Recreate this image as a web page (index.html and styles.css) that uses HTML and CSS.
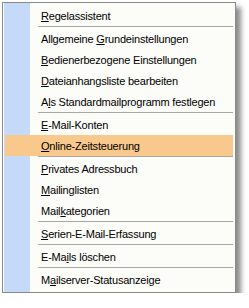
FILE: index.html
```html
<!DOCTYPE html>
<html>
<head>
<meta charset="utf-8">
<link rel="stylesheet" href="styles.css">
</head>
<body>
<div class="menu">
  <div class="item"><span class="label"><u>R</u>egelassistent</span></div>
  <div class="sep"></div>
  <div class="item"><span class="label">Allgemeine <u>G</u>rundeinstellungen</span></div>
  <div class="item"><span class="label"><u>B</u>edienerbezogene Einstellungen</span></div>
  <div class="item"><span class="label"><u>D</u>ateianhangsliste bearbeiten</span></div>
  <div class="item"><span class="label">A<u>l</u>s Standardmailprogramm festlegen</span></div>
  <div class="sep"></div>
  <div class="item"><span class="label"><u>E</u>-Mail-Konten</span></div>
  <div class="item active"><span class="label"><u>O</u>nline-Zeitsteuerung</span></div>
  <div class="sep"></div>
  <div class="item"><span class="label"><u>P</u>rivates Adressbuch</span></div>
  <div class="item"><span class="label"><u>M</u>ailinglisten</span></div>
  <div class="item"><span class="label">Mail<u>k</u>ategorien</span></div>
  <div class="sep"></div>
  <div class="item"><span class="label"><u>S</u>erien-E-Mail-Erfassung</span></div>
  <div class="sep"></div>
  <div class="item"><span class="label">E-Ma<u>i</u>ls löschen</span></div>
  <div class="sep"></div>
  <div class="item"><span class="label">M<u>a</u>ilserver-Statusanzeige</span></div>
</div>
</body>
</html>
```
FILE: styles.css
```css
html, body {
  margin: 0;
  padding: 0;
  background: #ffffff;
}
body {
  padding: 2px 0 0 2px;
  font-family: "Liberation Sans", Arial, sans-serif;
  font-size: 11px;
  letter-spacing: -0.2px;
  color: #000;
}
.menu {
  width: 232px;
  border: 1px solid #8a8a8a;
  background: linear-gradient(to right, #ffffff 0, #ffffff 1px, #c5d9f9 1px, #c5d9f9 27px, #fcfcf9 27px);
  padding: 2px 0;
  display: flex;
  flex-direction: column;
  box-shadow: 5px 5px 5px rgba(0, 0, 0, 0.45);
}
.item {
  height: 21px;
  display: flex;
  align-items: center;
  padding-left: 36px;
  margin: 0 2px 0 2px;
}
.item.active {
  background: #f9c88d;
}
.label {
  white-space: nowrap;
}
.label u {
  text-decoration: underline;
  text-underline-offset: 1px;
}
.sep {
  height: 1px;
  background: #a6a6a2;
  margin: 0 2px 1px 35px;
}
```
